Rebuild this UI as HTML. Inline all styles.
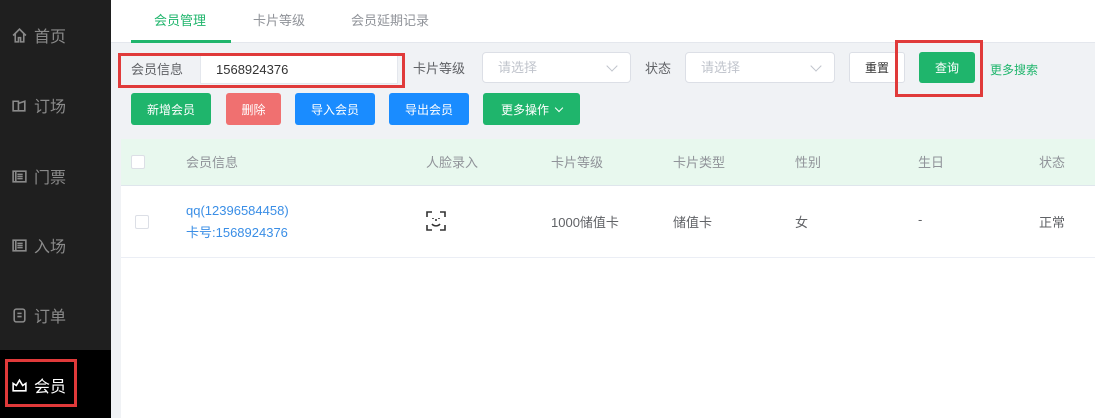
<!DOCTYPE html>
<html><head><meta charset="utf-8"><style>
*{margin:0;padding:0;box-sizing:border-box}
body{width:1095px;height:418px;overflow:hidden;background:#f0f2f5;font-family:"Liberation Sans","Noto Sans CJK SC",sans-serif;position:relative;font-size:13px;color:#606266}
.a{position:absolute}
.side{left:0;top:0;width:111px;height:418px;background:#1f1f1f}
.nav{left:11px;color:#8a8a8a;font-size:16px;display:flex;align-items:center;gap:6px;height:20px}
.nav svg{width:17px;height:17px}
.btn{height:32px;border-radius:3px;color:#fff;font-size:12px;display:flex;align-items:center;justify-content:center}
.sel{height:31px;background:#fff;border:1px solid #dcdfe6;border-radius:4px;color:#c0c4cc;padding-left:15px;line-height:29px}
.sel:after{content:"";position:absolute;right:14px;top:9px;width:7px;height:7px;border-right:1px solid #c0c4cc;border-bottom:1px solid #c0c4cc;transform:rotate(45deg)}
.th{top:152px;color:#909399;font-size:13px}
.td{top:212px;color:#606266;font-size:13px}
.cb{width:14px;height:14px;border:1px solid #dcdfe6;border-radius:2px;background:#fff}
</style></head><body>
<div class="a side"></div>
<div class="a" style="left:0;top:350px;width:111px;height:68px;background:#000"></div>
<div class="a nav" style="top:25px"><svg viewBox="0 0 16 16" fill="none" stroke="#8a8a8a" stroke-width="1.5"><path d="M2 8L8 2l6 6M4 6.5V14h3v-4h2v4h3V6.5"/></svg>首页</div>
<div class="a nav" style="top:95px"><svg viewBox="0 0 16 16" fill="none" stroke="#8a8a8a" stroke-width="1.5"><path d="M2 4h5v9H2zM7 6l6-2v9H7"/></svg>订场</div>
<div class="a nav" style="top:166px"><svg viewBox="0 0 16 16" fill="none" stroke="#8a8a8a" stroke-width="1.5"><rect x="2" y="3" width="12" height="10"/><path d="M6 6h5M6 8h5M6 10h5M4.5 3v10"/></svg>门票</div>
<div class="a nav" style="top:235px"><svg viewBox="0 0 16 16" fill="none" stroke="#8a8a8a" stroke-width="1.5"><rect x="2" y="3" width="12" height="10"/><path d="M6 6h5M6 8h5M6 10h5M4.5 3v10"/></svg>入场</div>
<div class="a nav" style="top:305px"><svg viewBox="0 0 16 16" fill="none" stroke="#8a8a8a" stroke-width="1.5"><rect x="3" y="2" width="10" height="12" rx="2"/><path d="M6 6h4M6 9h4"/></svg>订单</div>
<div class="a nav" style="top:375px;color:#fff"><svg viewBox="0 0 16 16" fill="none" stroke="#fff" stroke-width="1.5"><path d="M2 6l3 2 3-5 3 5 3-2v7H2z"/></svg>会员</div>
<div class="a" style="left:5px;top:359px;width:72px;height:48px;border:3px solid #e03a3a"></div>

<div class="a" style="left:111px;top:0;width:984px;height:43px;background:#fff;border-bottom:1px solid #e4e7ed"></div>
<div class="a" style="left:154px;top:10px;color:#1fb56c;font-size:13px">会员管理</div>
<div class="a" style="left:131px;top:40px;width:100px;height:3px;background:#1fb56c"></div>
<div class="a" style="left:253px;top:10px;color:#909399">卡片等级</div>
<div class="a" style="left:351px;top:10px;color:#909399">会员延期记录</div>

<div class="a" style="left:121px;top:56px;width:79px;height:28px;background:#f0f2f5;color:#606266;line-height:28px;padding-left:10px">会员信息</div>
<div class="a" style="left:200px;top:55px;width:198px;height:29px;background:#fff;border:1px solid #e4e7ed;line-height:27px;padding-left:15px;color:#333">1568924376</div>
<div class="a" style="left:118px;top:53px;width:287px;height:35px;border:3px solid #e03a3a"></div>
<div class="a" style="left:413px;top:58px">卡片等级</div>
<div class="a sel" style="left:482px;top:52px;width:149px">请选择</div>
<div class="a" style="left:645px;top:58px">状态</div>
<div class="a sel" style="left:685px;top:52px;width:150px">请选择</div>
<div class="a btn" style="left:849px;top:52px;width:56px;height:31px;background:#fff;border:1px solid #dcdfe6;color:#333">重置</div>
<div class="a btn" style="left:919px;top:52px;width:56px;height:31px;background:#1fb56c">查询</div>
<div class="a" style="left:895px;top:40px;width:88px;height:57px;border:3px solid #e03a3a"></div>
<div class="a" style="left:990px;top:61px;color:#1fb56c;font-size:12px">更多搜索</div>

<div class="a btn" style="left:131px;top:93px;width:80px;background:#1fb56c">新增会员</div>
<div class="a btn" style="left:226px;top:93px;width:55px;background:#f07070">删除</div>
<div class="a btn" style="left:295px;top:93px;width:80px;background:#1a8cff">导入会员</div>
<div class="a btn" style="left:389px;top:93px;width:80px;background:#1a8cff">导出会员</div>
<div class="a btn" style="left:483px;top:93px;width:97px;background:#1fb56c">更多操作 <span style="display:inline-block;width:6px;height:6px;border-right:1px solid #fff;border-bottom:1px solid #fff;transform:rotate(45deg);margin:-3px 0 0 7px"></span></div>

<div class="a" style="left:121px;top:139px;width:974px;height:279px;background:#fff"></div>
<div class="a" style="left:121px;top:139px;width:974px;height:47px;background:#e8f8ee;border-bottom:1px solid #dfe6ec"></div>
<div class="a cb" style="left:131px;top:155px"></div>
<div class="a th" style="left:186px">会员信息</div>
<div class="a th" style="left:426px">人脸录入</div>
<div class="a th" style="left:551px">卡片等级</div>
<div class="a th" style="left:673px">卡片类型</div>
<div class="a th" style="left:795px">性别</div>
<div class="a th" style="left:918px">生日</div>
<div class="a th" style="left:1039px">状态</div>
<div class="a" style="left:121px;top:257px;width:974px;height:1px;background:#ebeef5"></div>
<div class="a cb" style="left:135px;top:215px"></div>
<div class="a" style="left:186px;top:200px;color:#3a8ee6;line-height:22px">qq(12396584458)<br>卡号:1568924376</div>
<svg class="a" style="left:425px;top:210px" width="22" height="22" viewBox="0 0 22 22" fill="none" stroke="#333" stroke-width="1.6"><path d="M2 7V2h5M15 2h5v5M20 15v5h-5M7 20H2v-5M7 14c2 2.5 6 2.5 8 0"/><path d="M8 8v1M14 8v1M11 9v2"/></svg>
<div class="a td" style="left:551px">1000储值卡</div>
<div class="a td" style="left:673px">储值卡</div>
<div class="a td" style="left:795px">女</div>
<div class="a td" style="left:918px">-</div>
<div class="a td" style="left:1039px">正常</div>
</body></html>
